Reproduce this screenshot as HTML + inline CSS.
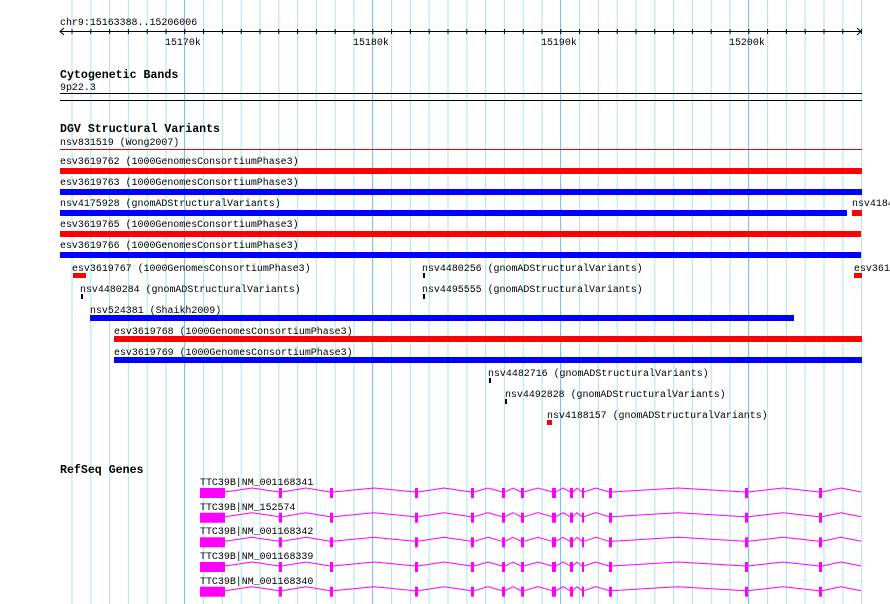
<!DOCTYPE html>
<html><head><meta charset="utf-8"><style>
html,body{margin:0;padding:0;background:#fff;width:890px;height:604px;overflow:hidden}
svg{display:block}
text{font-family:"Liberation Mono",monospace;font-size:9.95px;fill:#000}
.b{font-weight:bold;font-size:11.6px}
</style></head><body>
<svg width="890" height="604" viewBox="0 0 890 604" xmlns="http://www.w3.org/2000/svg">
<defs>
<pattern id="grid" x="71.5" y="0" width="18.8" height="604" patternUnits="userSpaceOnUse">
<rect x="0" y="0" width="1" height="604" fill="#a8e6ec"/>
</pattern>
<pattern id="tick" x="71.5" y="0" width="18.8" height="604" patternUnits="userSpaceOnUse">
<rect x="0" y="0" width="1" height="604" fill="#000"/>
</pattern>
<g id="gene">
<path d="M225,492 L252,488 L279,492 M282,492 L306,488 L330,492 M333,492 L374,488 L415,492 M418,492 L444,488 L471,492 M474,492 L488,488 L502,492 M505,492 L513,488 L521,492 M524,492 L538,488 L552,492 M556,492 L563,488 L570,492 M573,492 L577,488 L582,492 M584,492 L596,488 L609,492 M612,492 L678,488 L745,492 M748,492 L783,488 L819,492 M822,492 L841,488 L861,492" stroke="#ff00ff" stroke-width="1" fill="none"/>
<g fill="#ff00ff">
<rect x="200" y="488" width="25" height="10"/>
<rect x="279" y="488" width="3" height="10"/>
<rect x="330" y="488" width="3" height="10"/>
<rect x="415" y="488" width="3" height="10"/>
<rect x="471" y="488" width="3" height="10"/>
<rect x="502" y="488" width="3" height="10"/>
<rect x="521" y="488" width="3" height="10"/>
<rect x="552" y="488" width="4" height="10"/>
<rect x="570" y="488" width="3" height="10"/>
<rect x="582" y="488" width="2" height="10"/>
<rect x="609" y="488" width="3" height="10"/>
<rect x="745" y="488" width="3" height="10"/>
<rect x="819" y="488" width="3" height="10"/>
</g>
</g>
</defs>
<rect x="71" y="0" width="791" height="604" fill="url(#grid)"/>
<g fill="#88c0ea">
<rect x="184" y="0" width="1" height="604"/>
<rect x="372" y="0" width="1" height="604"/>
<rect x="560" y="0" width="1" height="604"/>
<rect x="748" y="0" width="1" height="604"/>
</g>

<text x="60" y="25">chr9:15163388..15206006</text>
<rect x="60" y="31" width="801" height="1" fill="#000"/>
<rect x="71" y="29" width="791" height="5" fill="url(#tick)"/>
<path d="M64,28 L60,31.5 L64,35 M857,28 L861,31.5 L857,35" stroke="#000" fill="none"/>
<text x="165" y="45">15170k</text>
<text x="353" y="45">15180k</text>
<text x="541" y="45">15190k</text>
<text x="729" y="45">15200k</text>

<text class="b" x="60" y="78">Cytogenetic Bands</text>
<text x="60" y="90">9p22.3</text>
<rect x="60" y="93" width="802" height="1" fill="#000"/>
<rect x="60" y="100" width="802" height="1" fill="#000"/>

<text class="b" x="60" y="132">DGV Structural Variants</text>
<text x="60" y="145">nsv831519 (Wong2007)</text>
<rect x="60" y="149" width="802" height="1" fill="#e00"/>

<text x="60" y="164">esv3619762 (1000GenomesConsortiumPhase3)</text>
<rect x="60" y="168" width="802" height="6" fill="#f00"/>
<text x="60" y="185">esv3619763 (1000GenomesConsortiumPhase3)</text>
<rect x="60" y="189" width="802" height="6" fill="#00f"/>
<text x="60" y="206">nsv4175928 (gnomADStructuralVariants)</text>
<rect x="60" y="210" width="787" height="6" fill="#00f"/>
<text x="852" y="206">nsv4184</text>
<rect x="852" y="210" width="10" height="6" fill="#f00"/>
<text x="60" y="227">esv3619765 (1000GenomesConsortiumPhase3)</text>
<rect x="60" y="231" width="801" height="6" fill="#f00"/>
<text x="60" y="248">esv3619766 (1000GenomesConsortiumPhase3)</text>
<rect x="60" y="252" width="801" height="6" fill="#00f"/>

<text x="72" y="271">esv3619767 (1000GenomesConsortiumPhase3)</text>
<rect x="73" y="273" width="13" height="5" fill="#f00"/>
<text x="422" y="271">nsv4480256 (gnomADStructuralVariants)</text>
<rect x="423" y="273" width="2" height="5" fill="#000"/>
<text x="854" y="271">esv361</text>
<rect x="854" y="273" width="8" height="5" fill="#f00"/>

<text x="80" y="292">nsv4480284 (gnomADStructuralVariants)</text>
<rect x="81" y="294" width="2" height="5" fill="#000"/>
<text x="422" y="292">nsv4495555 (gnomADStructuralVariants)</text>
<rect x="423" y="294" width="2" height="5" fill="#000"/>

<text x="90" y="313">nsv524381 (Shaikh2009)</text>
<rect x="90" y="315" width="704" height="6" fill="#00f"/>
<text x="114" y="334">esv3619768 (1000GenomesConsortiumPhase3)</text>
<rect x="114" y="336" width="748" height="6" fill="#f00"/>
<text x="114" y="355">esv3619769 (1000GenomesConsortiumPhase3)</text>
<rect x="114" y="357" width="748" height="6" fill="#00f"/>
<text x="488" y="376">nsv4482716 (gnomADStructuralVariants)</text>
<rect x="489" y="378" width="2" height="5" fill="#000"/>
<text x="505" y="397">nsv4492828 (gnomADStructuralVariants)</text>
<rect x="505" y="399" width="2" height="5" fill="#000"/>
<text x="547" y="418">nsv4188157 (gnomADStructuralVariants)</text>
<rect x="547" y="420" width="5" height="5" fill="#f00"/>

<text class="b" x="60" y="473">RefSeq Genes</text>
<text x="200" y="485">TTC39B|NM_001168341</text>
<text x="200" y="510">TTC39B|NM_152574</text>
<text x="200" y="534">TTC39B|NM_001168342</text>
<text x="200" y="559">TTC39B|NM_001168339</text>
<text x="200" y="584">TTC39B|NM_001168340</text>
<use href="#gene"/>
<use href="#gene" transform="translate(0,24.7)"/>
<use href="#gene" transform="translate(0,49.3)"/>
<use href="#gene" transform="translate(0,74)"/>
<use href="#gene" transform="translate(0,98.7)"/>
</svg>
</body></html>
